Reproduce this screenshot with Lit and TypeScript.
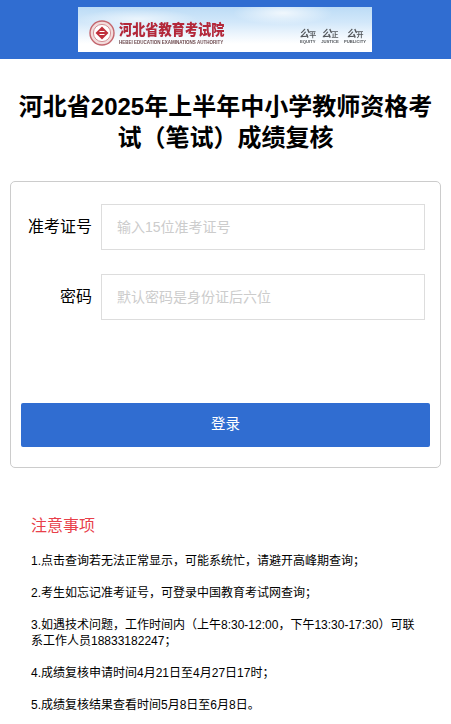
import { LitElement, html, css } from "lit";
import { customElement } from "lit/decorators.js";

@customElement("app-root")
export class AppRoot extends LitElement {
  static styles = css`
    :host {
      display: block;
      background: #fff;
      color: #000;
      font-family: "Liberation Sans", "Noto Sans CJK SC", sans-serif;
    }
    .top {
      background: #306dd1;
      height: 59px;
      padding: 7px 1px 0 0;
      box-sizing: border-box;
      display: flex;
      justify-content: center;
    }
    .banner {
      width: 294px;
      height: 45px;
      display: flex;
      align-items: flex-start;
      justify-content: space-between;
      padding: 13px 6px 0 11px;
      box-sizing: border-box;
      background:
        radial-gradient(ellipse 50px 12px at 205px 6px, rgba(255, 255, 255, 0.75), transparent),
        radial-gradient(ellipse 60px 10px at 60px 12px, rgba(255, 255, 255, 0.6), transparent),
        linear-gradient(180deg, #bcdcf6 0%, #d3e8fa 35%, #eef6fd 62%, #ffffff 82%);
      overflow: hidden;
    }
    .brand { display: flex; align-items: center; gap: 4px; filter: blur(0.7px); }
    .seal { width: 26px; height: 26px; display: block; }
    .brand-text { display: flex; flex-direction: column; }
    .cn {
      font-size: 13.2px;
      line-height: 17px;
      font-weight: 900;
      color: #b3283a;
      white-space: nowrap;
      transform: scaleY(1.15);
      transform-origin: center;
    }
    .en {
      font-size: 4.5px;
      line-height: 7px;
      margin-top: 1px;
      font-weight: 700;
      color: #6e4a4e;
      white-space: nowrap;
    }
    .values { display: flex; gap: 5px; filter: blur(0.6px); margin-top: 9px; }
    .value { display: flex; flex-direction: column; align-items: center; color: #55585c; }
    .mark { display: flex; align-items: flex-end; line-height: 10px; white-space: nowrap; font-weight: 700; }
    .mark i { font-size: 10px; }
    .mark em { font-size: 7px; font-style: normal; line-height: 9px; }
    .label { font-size: 4.2px; line-height: 6px; font-weight: 700; white-space: nowrap; }

    h1 {
      margin: 0;
      padding: 32px 12px 28px;
      font-size: 24px;
      line-height: 31px;
      font-weight: 700;
      text-align: center;
    }
    .card {
      margin: 0 10px;
      height: 287px;
      box-sizing: border-box;
      border: 1px solid #ccc;
      border-radius: 5px;
      padding: 22px 15px 20px 10px;
      display: flex;
      flex-direction: column;
    }
    .row { display: flex; align-items: center; gap: 9px; margin-bottom: 24px; }
    label {
      width: 71px;
      text-align: right;
      font-size: 16px;
      line-height: 46px;
    }
    input {
      flex: 1;
      min-width: 0;
      height: 46px;
      box-sizing: border-box;
      border: 1px solid #ddd;
      padding: 0 15px;
      font: 14px "Liberation Sans", "Noto Sans CJK SC", sans-serif;
      outline: none;
      background: #fff;
    }
    input::placeholder { color: #ccc; opacity: 1; }
    button {
      margin-top: auto;
      margin-right: -5px;
      height: 44px;
      border: 0;
      border-radius: 2px;
      background: #306dd1;
      color: #fff;
      padding: 0 0 5px;
      font: 14.5px "Liberation Sans", "Noto Sans CJK SC", sans-serif;
    }
    .notes { padding: 47px 32px 0 31px; }
    h2 {
      margin: 0 0 16px;
      font-size: 16px;
      line-height: 22px;
      font-weight: 400;
      color: #e8404a;
    }
    p {
      margin: 0 0 16px;
      font-size: 12px;
      line-height: 16px;
      color: #000;
    }
  `;

  render() {
    return html`
      <div class="top">
        <div class="banner">
          <div class="brand">
            <svg class="seal" viewBox="0 0 26 26" aria-hidden="true">
              <circle cx="13" cy="13" r="12" fill="#f2dcdc" stroke="#c4666e" stroke-width="1.4" />
              <circle cx="13" cy="13" r="8.6" fill="#fff" stroke="#d39096" stroke-width="1" />
              <path d="M13 6.5 19.5 13 13 19.5 6.5 13Z" fill="#c0303c" />
              <path d="M10.5 11.5h5M15.5 14.5h-5" stroke="#fff" stroke-width="1.2" fill="none" />
            </svg>
            <div class="brand-text">
              <span class="cn">河北省教育考试院</span>
              <span class="en">HEBEI EDUCATION EXAMINATIONS AUTHORITY</span>
            </div>
          </div>
          <div class="values">
            <div class="value"><div class="mark"><i>公</i><em>平</em></div><span class="label">EQUITY</span></div>
            <div class="value"><div class="mark"><i>公</i><em>正</em></div><span class="label">JUSTICE</span></div>
            <div class="value"><div class="mark"><i>公</i><em>开</em></div><span class="label">PUBLICITY</span></div>
          </div>
        </div>
      </div>
      <h1>河北省2025年上半年中小学教师资格考试（笔试）成绩复核</h1>
      <form class="card">
        <div class="row">
          <label>准考证号</label>
          <input type="text" placeholder="输入15位准考证号" />
        </div>
        <div class="row">
          <label>密码</label>
          <input type="text" placeholder="默认密码是身份证后六位" />
        </div>
        <button type="button">登录</button>
      </form>
      <section class="notes">
        <h2>注意事项</h2>
        <p>1.点击查询若无法正常显示，可能系统忙，请避开高峰期查询；</p>
        <p>2.考生如忘记准考证号，可登录中国教育考试网查询；</p>
        <p>3.如遇技术问题，工作时间内（上午8:30-12:00，下午13:30-17:30）可联系工作人员18833182247；</p>
        <p>4.成绩复核申请时间4月21日至4月27日17时；</p>
        <p>5.成绩复核结果查看时间5月8日至6月8日。</p>
      </section>
    `;
  }
}
